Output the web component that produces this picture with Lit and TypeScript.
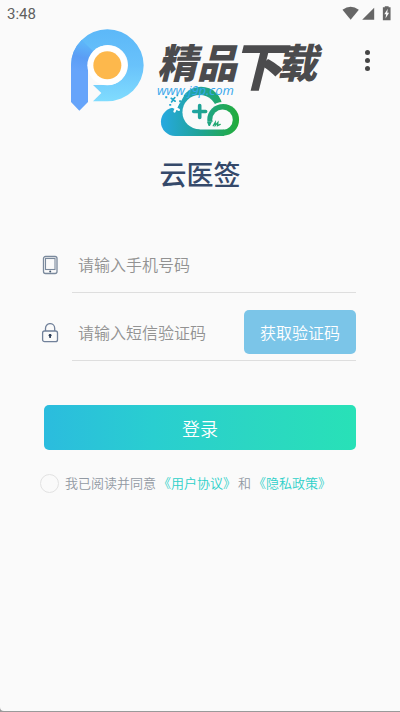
import { LitElement, html, css, svg } from "lit";
import { customElement } from "lit/decorators.js";

const statusIcons = html`
  <svg class="status-icons" viewBox="0 0 52 16" aria-hidden="true">
    <path fill="#666" d="M0.5 3.6 Q9 -2.6 17.5 3.6 L9 14Z" />
    <path fill="#666" d="M33.5 1.5V14H21Z" />
    <path fill="#666" d="M42.5 1h2V0h4v1h2v13.5h-8Z" />
    <path fill="#fafafa" d="M47.6 2.5L44 8.3H45.9L45.2 12.6L49 6.6H47.1Z" />
  </svg>
`;

const brandMark = html`
  <svg class="brand-mark" viewBox="33 27 219 244" aria-hidden="true">
    <defs>
      <linearGradient id="bowl" x1="0" y1="0" x2="0" y2="1">
        <stop offset="0" stop-color="#5cb8f8" />
        <stop offset="0.5" stop-color="#69c2fb" />
        <stop offset="1" stop-color="#80dcfe" />
      </linearGradient>
      <linearGradient id="stem" gradientUnits="userSpaceOnUse" x1="70" y1="70" x2="50" y2="150">
        <stop offset="0" stop-color="#5db4f9" />
        <stop offset="0.5" stop-color="#5b9df5" />
        <stop offset="1" stop-color="#66a4fa" />
      </linearGradient>
    </defs>
    <path
      fill="url(#bowl)"
      d="M33 135A109 108 0 0 1 142 27A109 108 0 0 1 142 243H99L124 218L99 194H142A60 60 0 1 0 84 135V150H33Z"
    />
    <path fill="url(#stem)" d="M33 135A109 108 0 0 1 65 59L100 93Q84 110 84 135V245L58 271L33 245Z" />
    <circle cx="142" cy="135" r="60" fill="#fff" />
    <circle cx="142" cy="135" r="42" fill="#fdb84c" />
  </svg>
`;

const cloudLogo = html`
  <svg class="cloud" viewBox="32 17 238 151" role="img" aria-label="云医签">
    <defs>
      <linearGradient id="sky" gradientUnits="userSpaceOnUse" x1="33" y1="0" x2="269" y2="0">
        <stop offset="0" stop-color="#27a9e1" />
        <stop offset="0.5" stop-color="#1fa397" />
        <stop offset="1" stop-color="#22ac38" />
      </linearGradient>
      <mask id="shape" maskUnits="userSpaceOnUse" x="30" y="15" width="242" height="155">
        <circle cx="76" cy="125" r="43" fill="#fff" />
        <path fill="#fff" d="M76 90L100 50H160V168H76Z" />
        <circle cx="154" cy="84" r="65" fill="#fff" />
        <path fill="#000" d="M30 15H92L102 48L92 66L78 84L58 78L30 88Z" />
        <circle cx="150" cy="96" r="52" fill="#000" />
        <path fill="#000" d="M150 96H222V168H150Z" />
        <circle cx="221" cy="119" r="54" fill="#000" />
        <circle cx="221" cy="119" r="48" fill="#fff" />
        <circle cx="219" cy="119" r="31" fill="#000" />
        <path fill="#000" d="M165 125H219V168H165Z" />
        <path fill="#fff" d="M100 148H224V168H100Z" />
      </mask>
    </defs>
    <rect x="30" y="15" width="242" height="155" fill="url(#sky)" mask="url(#shape)" />
    <g stroke="url(#sky)" fill="none" stroke-linecap="round">
      <path stroke-width="11" d="M132 94.1L168 94M150 76L150.1 112" />
      <path stroke-width="5" d="M64 54L76 63M75 52L65 65" />
      <path stroke-width="4" d="M191 137L197 127V136L205 127L204 137L212 133" />
    </g>
    <path fill="url(#sky)" d="M46 48h6v6h-6ZM58 71h6v6h-6ZM80 43h5v5h-5ZM88 60h6v6h-6ZM172 125h15l-6 13h-4Z" />
    <path stroke="#fff" stroke-width="7" stroke-linecap="round" d="M70 80L87 89M83 74L74 94" />
  </svg>
`;

const phoneIcon = svg`
  <svg class="field-icon" viewBox="0 0 20 20" aria-hidden="true" fill="none" stroke="#7a899c">
    <rect x="3.5" y="1.5" width="13.5" height="17" rx="2" stroke-width="1.3" />
    <rect x="5.5" y="3.5" width="9.5" height="11" stroke-width="1.1" />
    <circle cx="10.2" cy="16.5" r="1" fill="#44566f" stroke="none" />
  </svg>
`;

const lockIcon = svg`
  <svg class="field-icon" viewBox="0 0 20 20" aria-hidden="true" fill="none" stroke="#71819a" stroke-width="1.3">
    <path d="M5.5 8V5.2A4.6 4.6 0 0 1 14.7 5.2V8" />
    <rect x="2.6" y="8" width="14.9" height="10.7" rx="2" />
    <path d="M10.1 11.2V15" stroke="#2b3d58" stroke-width="1.6" />
    <circle cx="10.1" cy="12.3" r="1.4" fill="#2b3d58" stroke="none" />
  </svg>
`;

@customElement("app-root")
export class AppRoot extends LitElement {
  static styles = css`
    :host {
      display: block;
      background: #9a9a9a;
      font-family: "Noto Sans CJK SC", sans-serif;
    }
    * {
      box-sizing: border-box;
    }
    .screen {
      position: relative;
      display: flex;
      flex-direction: column;
      min-height: calc(100vh - 1px);
      background: #fafafa;
      border-bottom-left-radius: 4px;
    }
    :host::after {
      content: "";
      display: block;
      height: 1px;
    }
    .status {
      display: flex;
      align-items: center;
      justify-content: space-between;
      height: 28px;
      padding: 0 8px 0 7px;
      font: 15px/20px Roboto, sans-serif;
      color: #606060;
    }
    .status-icons {
      width: 50px;
      height: 16px;
    }
    .watermark {
      position: absolute;
      top: 29px;
      left: 0;
      right: 0;
      display: flex;
      justify-content: center;
      gap: 13px;
      padding-right: 12px;
      pointer-events: none;
    }
    .brand-mark {
      width: 73px;
      height: 82px;
      flex: none;
    }
    .brand-text {
      width: 160px;
      font-style: italic;
    }
    .brand-name {
      display: flex;
      align-items: flex-start;
      height: 53px;
      padding-top: 12px;
      font-size: 40px;
      line-height: 40px;
      font-weight: 900;
      color: #4b4b4d;
    }
    .brand-name .tall {
      font-size: 52px;
      line-height: 46px;
      margin: 0 -6px;
    }
    .brand-url {
      font: italic 13px/16px "Open Sans", "Noto Sans", sans-serif;
      color: #38a8ec;
    }
    .menu {
      position: absolute;
      top: 44px;
      right: 17px;
      display: flex;
      flex-direction: column;
      align-items: center;
      justify-content: center;
      gap: 3px;
      width: 32px;
      height: 32px;
      padding: 0;
      border: 0;
      background: none;
    }
    .menu i {
      width: 5px;
      height: 5px;
      border-radius: 50%;
      background: #454545;
    }
    .intro {
      display: flex;
      flex-direction: column;
      align-items: center;
      padding-top: 58px;
    }
    .cloud {
      width: 80px;
      height: 50px;
    }
    h1 {
      margin: 18px 0 42px;
      font-size: 27px;
      line-height: 40px;
      font-weight: 500;
      color: #35496a;
    }
    form {
      display: flex;
      flex-direction: column;
      padding: 0 44px 0 40px;
    }
    .row {
      display: flex;
      align-items: center;
      gap: 12px;
      margin-bottom: 11px;
    }
    .field-icon {
      display: block;
      width: 20px;
      height: 20px;
    }
    .field {
      flex: 1;
      min-width: 0;
      display: flex;
      align-items: center;
      height: 57px;
      border-bottom: 1px solid #dedede;
    }
    .field input {
      flex: 1;
      min-width: 0;
      height: 32px;
      padding: 0 0 0 6px;
      border: 0;
      outline: 0;
      background: none;
      font: 350 16px/24px "Noto Sans CJK SC", sans-serif;
      color: #333;
    }
    .field input::placeholder {
      color: #929292;
      opacity: 1;
    }
    .code,
    .login {
      border: 0;
      border-radius: 5px;
      color: #fff;
      font-family: inherit;
      font-weight: 350;
    }
    .code {
      width: 112px;
      height: 44px;
      padding: 0;
      background: #7bc5e8;
      font-size: 16px;
    }
    .login {
      height: 45px;
      margin: 33px 0 23px 4px;
      background: linear-gradient(90deg, #2bbcde, #29ced0 35%, #2bd6c3 65%, #28e1b7);
      font-size: 18px;
    }
    .agree {
      display: flex;
      align-items: center;
      gap: 2px;
      font-size: 13px;
      line-height: 20px;
      font-weight: 350;
      color: #9299a3;
      white-space: nowrap;
    }
    .agree input {
      appearance: none;
      flex: none;
      width: 19px;
      height: 19px;
      margin: 0 4px 0 0;
      border: 1px solid #e2e2e2;
      border-radius: 50%;
    }
    .agree input:checked {
      background: #2dd0c9;
    }
    .agree a {
      color: #2dd0c9;
      text-decoration: none;
    }
  `;

  render() {
    return html`
      <div class="screen">
        <div class="status"><span>3:48</span>${statusIcons}</div>
        <main>
          <div class="intro">
            ${cloudLogo}
            <h1>云医签</h1>
          </div>
          <form @submit=${(e: Event) => e.preventDefault()}>
            <div class="row">
              <label for="phone" aria-label="手机号码">${phoneIcon}</label>
              <div class="field">
                <input id="phone" type="tel" placeholder="请输入手机号码" />
              </div>
            </div>
            <div class="row">
              <label for="code" aria-label="短信验证码">${lockIcon}</label>
              <div class="field">
                <input id="code" type="text" placeholder="请输入短信验证码" />
                <button class="code" type="button">获取验证码</button>
              </div>
            </div>
            <button class="login" type="submit">登录</button>
            <div class="agree">
              <input id="agree" type="checkbox" />
              <label for="agree">我已阅读并同意</label>
              <a href="#terms">《用户协议》</a>
              <span>和</span>
              <a href="#privacy">《隐私政策》</a>
            </div>
          </form>
        </main>
        <div class="watermark">
          ${brandMark}
          <div class="brand-text">
            <div class="brand-name">
              <span>精品</span><span class="tall">下</span><span>载</span>
            </div>
            <div class="brand-url">www.j9p.com</div>
          </div>
        </div>
        <button class="menu" type="button" aria-label="菜单"><i></i><i></i><i></i></button>
      </div>
    `;
  }
}
